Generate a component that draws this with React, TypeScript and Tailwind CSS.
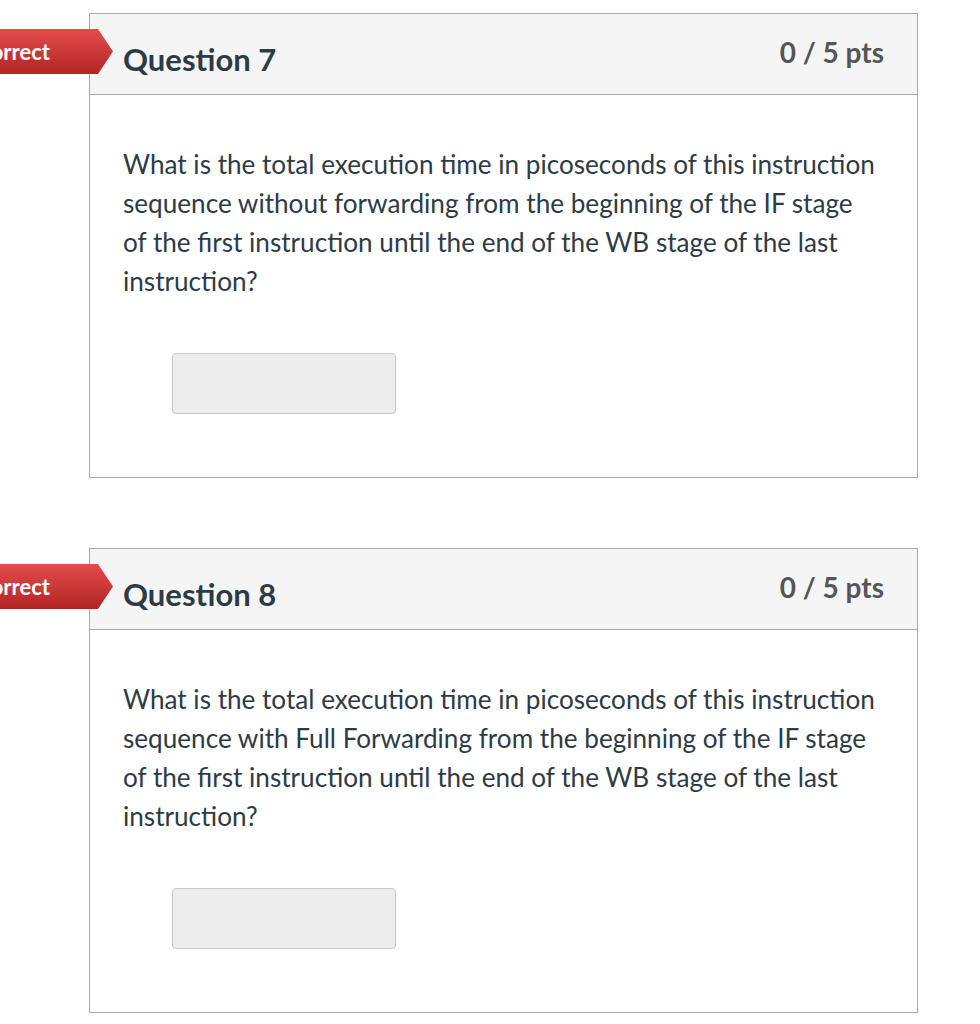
const questions = [
  {
    title: "Question 7",
    text: "What is the total execution time in picoseconds of this instruction sequence without forwarding from the beginning of the IF stage of the first instruction until the end of the WB stage of the last instruction?",
  },
  {
    title: "Question 8",
    text: "What is the total execution time in picoseconds of this instruction sequence with Full Forwarding from the beginning of the IF stage of the first instruction until the end of the WB stage of the last instruction?",
  },
];

function QuestionCard({ title, text }: { title: string; text: string }) {
  return (
    <div className="relative ml-[89px] w-[829px]">
      <div className="absolute top-[16px] left-[-149px] w-[173px] h-[45px] flex items-center justify-end pr-[63px] bg-gradient-to-b from-[#e54b4b] to-[#b22424] [clip-path:polygon(0_0,calc(100%_-_15px)_0,100%_50%,calc(100%_-_15px)_100%,0_100%)]">
        <span className="text-white font-bold text-[22px]">Incorrect</span>
      </div>

      <div className="border border-[#a9a9a9]">
        <div className="flex justify-between items-start h-[81px] px-[33px] bg-[#f5f5f5] border-b border-[#a9a9a9]">
          <h2 className="pt-[27px] text-[31px] leading-[36px] font-bold text-[#2d3b45]">{title}</h2>
          <span className="pt-[21px] text-[28px] leading-[34px] font-bold text-[#555555]">0 / 5 pts</span>
        </div>

        <div className="pt-[50px] pb-[63px] pl-[33px] pr-[36px]">
          <p className="text-[26.14px] leading-[39px] text-[#2d3b45]">{text}</p>
          <input className="block mt-[52px] ml-[49px] w-[224px] h-[61px] bg-[#ededed] border border-[#c8c8c8] rounded-[4px] focus:outline-none" />
        </div>
      </div>
    </div>
  );
}

export default function App() {
  return (
    <div className="min-h-[1024px] bg-white pt-[13px] overflow-hidden font-['Lato',sans-serif]">
      <div className="flex flex-col gap-[70px]">
        {questions.map((q) => (
          <QuestionCard key={q.title} title={q.title} text={q.text} />
        ))}
      </div>
    </div>
  );
}
